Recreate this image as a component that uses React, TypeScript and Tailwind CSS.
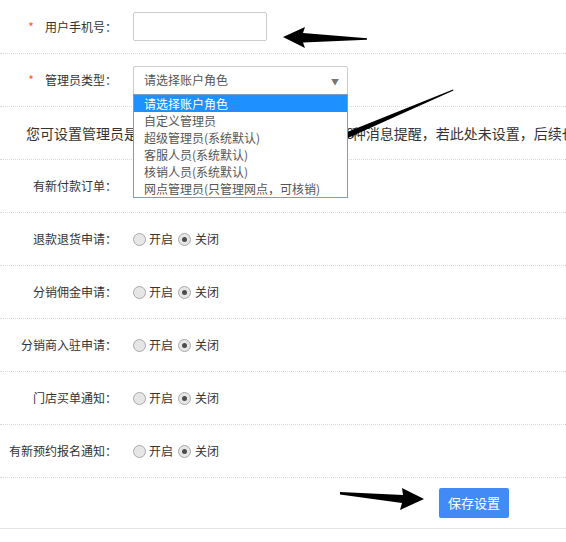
const roles = [
  '请选择账户角色',
  '自定义管理员',
  '超级管理员(系统默认)',
  '客服人员(系统默认)',
  '核销人员(系统默认)',
  '网点管理员(只管理网点，可核销)',
];

const notices = ['有新付款订单', '退款退货申请', '分销佣金申请', '分销商入驻申请', '门店买单通知', '有新预约报名通知'];

const Radio = ({ checked }: { checked?: boolean }) => (
  <span className="w-[13px] h-[13px] rounded-full border border-[#a9a9a9] bg-[#e6e6e6] flex items-center justify-center shrink-0">
    {checked && <span className="w-[5px] h-[5px] rounded-full bg-[#4d4d4d]" />}
  </span>
);

const Label = ({ text, required }: { text: string; required?: boolean }) => (
  <div className="w-[117px] shrink-0 text-right whitespace-nowrap">
    {required && <span className="text-[#ff5a1f] mr-[11px]">*</span>}
    {text}：
  </div>
);

export default function App() {
  return (
    <div className="relative w-[566px] h-[542px] overflow-hidden bg-white text-[12px] text-[#333] font-['Noto_Sans_CJK_SC',sans-serif]">
      <div className="flex items-center h-[54px] border-b border-dotted border-[#d9d9d9]">
        <Label text="用户手机号" required />
        <div className="ml-4 w-[134px] h-[29px] border border-[#ccc] rounded-[2px] bg-white" />
      </div>

      <div className="flex items-center h-[53px] border-b border-dotted border-[#d9d9d9]">
        <Label text="管理员类型" required />
        <div className="relative ml-4 w-[215px] h-[29px] border border-[#ccc] rounded-[2px] pl-[10px] flex items-center text-[#555]">
          请选择账户角色
          <span className="absolute right-[8px] top-[9px] text-[8px] text-[#777]">▼</span>
          <div className="absolute left-[-1px] top-[27px] w-[215px] border border-[#7f9db9] bg-white z-10">
            {roles.map((r, i) => (
              <div
                key={r}
                className={
                  i === 0
                    ? 'h-[17px] leading-[17px] pl-[10px] bg-[#1e90ff] text-white whitespace-nowrap'
                    : 'h-[17px] leading-[17px] pl-[10px] text-[#555] whitespace-nowrap'
                }
              >
                {r}
              </div>
            ))}
          </div>
        </div>
      </div>

      <div className="flex items-center h-[53px] border-b border-dotted border-[#d9d9d9] pl-[26px] text-[14px] whitespace-nowrap">
        您可设置管理员是否接收以下订单及售后、分销等<span className="tracking-[-2px]">共8</span>种消息提醒，若此处未设置，后续也可在管理员列表中修改
      </div>

      {notices.map((n) => (
        <div key={n} className="flex items-center h-[53px] border-b border-dotted border-[#d9d9d9]">
          <Label text={n} />
          <div className="ml-4 flex items-center">
            <Radio />
            <span className="ml-[3px]">开启</span>
            <span className="ml-[5px]">
              <Radio checked />
            </span>
            <span className="ml-[4px]">关闭</span>
          </div>
        </div>
      ))}

      <div className="flex items-center h-[51px] border-b border-[#e3e3e3] pl-[439px]">
        <button className="w-[70px] h-[30px] rounded-[2px] bg-[#428bf7] text-white text-[13px]">保存设置</button>
      </div>

      <svg className="absolute inset-0 pointer-events-none" width="566" height="542" viewBox="0 0 566 542">
        <polygon points="283,37 305,27 303,33 367,38.3 367,39.7 303,42.5 305,48" fill="#000" />
        <polygon points="258,173 275,155 277.5,160 453,89.5 453.5,90.5 281,168 283,173" fill="#000" />
        <polygon points="424,499 402,488 403,495 340,492 340,494.5 402,503 400,510" fill="#000" />
      </svg>
    </div>
  );
}
